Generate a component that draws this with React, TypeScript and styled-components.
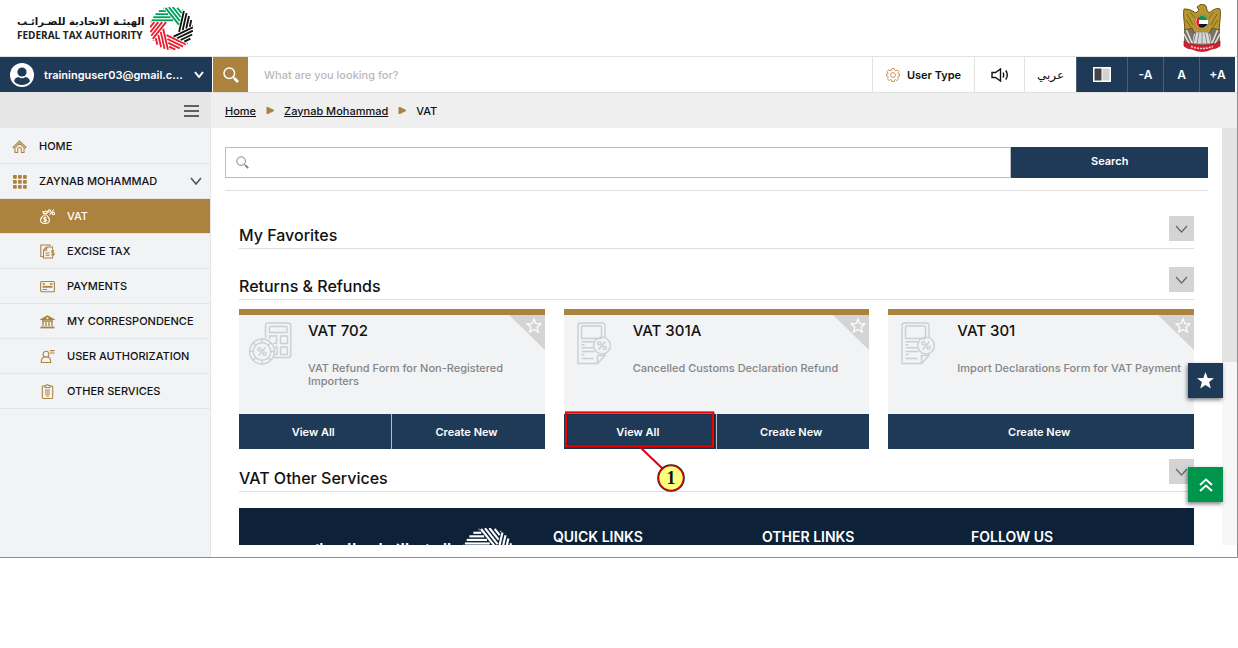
import React from "react";
import styled, { createGlobalStyle, css } from "styled-components";

const navy = "#1f3a57";
const gold = "#ac823f";
const grey = "#d4d4d4";

const GlobalStyle = createGlobalStyle`
  *, *::before, *::after { box-sizing: border-box; }
  body {
    margin: 0;
    background: #fff;
    color: #111;
    font-family: Inter, "Open Sans", "DejaVu Sans", sans-serif;
    font-size: 12px;
  }
  button, input { font: inherit; color: inherit; border: 0; margin: 0; padding: 0; background: none; border-radius: 0; }
  button { cursor: pointer; }
  a { color: inherit; text-decoration: none; }
  ul, ol { list-style: none; margin: 0; padding: 0; }
  h2, h3, p { margin: 0; font-weight: 500; }
  svg { display: block; flex: none; }
`;

const Frame = styled.div`
  display: flex;
  flex-direction: column;
  height: calc(100vh - 90px);
  min-height: 480px;
  border-right: 1px solid #8e8e8e;
  border-bottom: 1px solid #8e8e8e;
`;

const Header = styled.header`
  display: flex;
  align-items: center;
  justify-content: space-between;
  flex: none;
  height: 57px;
  padding: 0 16px 0 17px;
  border-bottom: 1px solid #e2e2e2;
`;

const Brand = styled.a`
  display: flex;
  align-items: center;
  gap: 6px;
`;

const BrandText = styled.span`
  display: flex;
  flex-direction: column;
  align-items: stretch;
  white-space: nowrap;
`;

const BrandArabic = styled.span<{ $size: number }>`
  font: bold ${(p) => p.$size}px/14px "DejaVu Sans", sans-serif;
  text-align: right;
  white-space: nowrap;
`;

const BrandLatin = styled.span`
  font: 700 10px/12px "Open Sans", sans-serif;
  color: #222;
`;

const TopBar = styled.div`
  display: flex;
  flex: none;
  height: 36px;
  padding-right: 2px;
  border-bottom: 1px solid #e2e2e2;
`;

const UserButton = styled.button`
  display: flex;
  align-items: center;
  flex: none;
  width: 212px;
  padding: 0 8px 0 10px;
  gap: 10px;
  background: ${navy};
  color: #fff;
  font-size: 11px;
  font-weight: 600;
  text-align: left;
`;

const UserName = styled.span`
  flex: 1;
  white-space: nowrap;
`;

const GlobalSearch = styled.form`
  display: flex;
  flex: 1;
  min-width: 0;
  padding-left: 1px;
`;

const GlobalSearchButton = styled.button`
  display: flex;
  align-items: center;
  justify-content: center;
  width: 35px;
  background: ${gold};
  color: #fff;
`;

const GlobalSearchInput = styled.input`
  flex: 1;
  min-width: 0;
  padding: 0 16px;
  outline: 0;
  font-size: 11px;
  font-weight: 500;
  &::placeholder { color: #b9b9b9; opacity: 1; }
`;

const Tool = styled.button<{ $width: number; $dark?: boolean }>`
  display: flex;
  align-items: center;
  justify-content: center;
  gap: 7px;
  flex: none;
  width: ${(p) => p.$width}px;
  font-size: 11px;
  font-weight: 600;
  border-left: 1px solid #e2e2e2;
  ${(p) => p.$dark && css`
    background: ${navy};
    color: #fff;
    font-size: 12px;
    border-left-color: #4a6078;
  `}
`;

const Arabic = styled.span`
  font: 12px "DejaVu Sans", sans-serif;
`;

const Columns = styled.div`
  display: flex;
  flex: 1;
  min-height: 0;
`;

const Sidebar = styled.nav`
  flex: none;
  width: 211px;
  background: #f1f3f5;
  border-right: 1px solid #e4e5e7;
`;

const MenuToggle = styled.button`
  display: flex;
  align-items: center;
  justify-content: flex-end;
  width: 100%;
  height: 35px;
  padding-right: 11px;
  background: #e6e6e6;
  color: #333;
`;

const NavList = styled.ul`
  padding-top: 1px;
`;

const NavLink = styled.a<{ $nested?: boolean; $active?: boolean }>`
  display: flex;
  align-items: center;
  gap: 12px;
  height: 35px;
  padding: 0 8px 0 ${(p) => (p.$nested ? 40 : 12)}px;
  border-bottom: 1px solid #e4e5e7;
  font-size: 11px;
  font-weight: 500;
  white-space: nowrap;
  color: ${(p) => (p.$active ? "#fff" : "#111")};
  background: ${(p) => (p.$active ? gold : "transparent")};
  svg:first-child { color: ${(p) => (p.$active ? "#fff" : gold)}; }
  svg:last-child:not(:first-child) { margin-left: auto; color: #555; }
`;

const Main = styled.main`
  position: relative;
  display: flex;
  flex-direction: column;
  flex: 1;
  min-width: 0;
  padding-bottom: 12px;
`;

const Breadcrumb = styled.ol`
  display: flex;
  align-items: center;
  gap: 10px;
  flex: none;
  height: 35px;
  padding: 0 14px;
  background: #efefef;
  font-size: 11px;
  font-weight: 500;
  a { text-decoration: underline; }
`;

const ScrollRow = styled.div`
  display: flex;
  flex: 1;
  min-height: 0;
`;

const Content = styled.div`
  flex: 1;
  min-width: 0;
  overflow: hidden;
  padding: 19px 14px 0;
`;

const ScrollTrack = styled.div`
  width: 15px;
  background: #f7f7f7;
`;

const ScrollThumb = styled.div`
  height: 56%;
  background: #e3e3e3;
`;

const ServiceSearch = styled.form`
  display: flex;
  height: 31px;
`;

const SearchField = styled.label`
  display: flex;
  align-items: center;
  flex: 1;
  min-width: 0;
  padding-left: 10px;
  border: 1px solid #bdbdbd;
  color: #777;
`;

const SearchInput = styled.input`
  flex: 1;
  min-width: 0;
  height: 100%;
  padding: 0 8px;
  outline: 0;
`;

const SearchButton = styled.button`
  width: 20%;
  padding-bottom: 3px;
  background: ${navy};
  color: #fff;
  font-size: 11px;
  font-weight: 600;
`;

const Sections = styled.div`
  margin-top: 12px;
  padding: 25px 14px 0;
  border-top: 1px solid #e0e0e0;
`;

const SectionHead = styled.div<{ $gap: number }>`
  display: flex;
  justify-content: space-between;
  height: 33px;
  margin-bottom: ${(p) => p.$gap}px;
  border-bottom: 1px solid #dedede;
`;

const SectionTitle = styled.h2`
  align-self: flex-end;
  font-size: 16px;
  line-height: 26px;
`;

const Collapse = styled.button`
  display: flex;
  align-items: center;
  justify-content: center;
  width: 25px;
  height: 25px;
  background: ${grey};
  color: #666;
`;

const Cards = styled.div`
  display: grid;
  grid-template-columns: repeat(3, 1fr);
  gap: 19px;
  margin-bottom: 10px;
`;

const Card = styled.article`
  position: relative;
  display: flex;
  flex-direction: column;
  border-top: 6px solid ${gold};
  background: #f1f3f5;
`;

const CardBody = styled.div`
  display: flex;
  gap: 14px;
  min-height: 99px;
  padding: 7px 0 0 10px;
  color: #ccced0;
`;

const CardText = styled.div`
  flex: 1;
`;

const CardTitle = styled.h3`
  font-size: 15px;
  line-height: 18px;
  color: #111;
`;

const CardDescription = styled.p`
  margin-top: 22px;
  font-size: 11px;
  line-height: 13px;
  color: #858585;
`;

const Favourite = styled.button`
  position: absolute;
  top: 0;
  right: 0;
`;

const CardActions = styled.div`
  display: flex;
`;

const CardAction = styled.button`
  flex: 1;
  height: 35px;
  padding-right: 4px;
  background: ${navy};
  color: #fff;
  font-size: 11px;
  font-weight: 600;
  & + & { border-left: 1px solid #b5bec8; }
`;

const Callout = styled.svg`
  position: absolute;
  left: 0;
  bottom: -44px;
  z-index: 2;
  pointer-events: none;
`;

const SiteFooter = styled.footer`
  display: grid;
  grid-template-columns: 314fr 209fr 209fr 223fr;
  height: 160px;
  padding-top: 20px;
  background: #0d2238;
  color: #fff;
`;

const FooterTitle = styled.h2`
  font-size: 14px;
  line-height: 18px;
  font-weight: 600;
`;

const FooterBrand = styled.div`
  display: flex;
  align-items: flex-start;
  justify-content: flex-end;
  gap: 12px;
  padding-right: 40px;
`;

const FooterBrandText = styled.div`
  padding-top: 12px;
`;

const FloatingButton = styled.button<{ $top: number; $green?: boolean }>`
  position: absolute;
  right: 14px;
  top: ${(p) => p.$top}px;
  display: flex;
  align-items: center;
  justify-content: center;
  width: 35px;
  height: 35px;
  background: ${(p) => (p.$green ? "#00954c" : navy)};
  color: #fff;
  box-shadow: -1px 2px 4px rgba(0, 0, 0, 0.5);
`;

const STEP = 360 / 7;

function Emblem({ size, colors }: { size: number; colors: string[] }) {
  const rad = (STEP * Math.PI) / 180;
  return (
    <svg width={size} height={size} viewBox="-21 -21 42 42" aria-hidden="true">
      {colors.map((color, g) => (
        <g key={g} transform={`rotate(${g * STEP})`} stroke={color} strokeWidth="1.8">
          {[8, 11, 14, 17, 19.7].map((h) => (
            <line
              key={h}
              x1={-Math.sqrt(441 - h * h)}
              x2={(6.2 - Math.cos(rad) * h) / Math.sin(rad)}
              y1={-h}
              y2={-h}
            />
          ))}
        </g>
      ))}
    </svg>
  );
}

const brandColors = ["#00a05a", "#00a05a", "#111", "#111", "#ee1c2e", "#ee1c2e", "#ee1c2e"];

function Falcon() {
  return (
    <svg width="38" height="48" viewBox="0 0 38 48" role="img" aria-label="UAE emblem">
      <path d="M4 20 L1 25 V40 L9 43 H29 L37 40 V25 L34 20 Z" fill="#77716a" />
      <path d="M3 25 L9 39 M1 30 L7 41 M35 25 L29 39 M37 30 L31 41 M12 28 L10 40 M26 28 L28 40" stroke="#e9e4dc" strokeWidth="1.5" />
      <path d="M16 6 L14 3 Q17 0 20 0 Q24 1 24 6 L26 9 Q33 3 37 5 Q38 10 37 16 L36 26 L29 24 L26 30 H12 L9 24 L2 26 L1 16 Q0 9 1 5 Q6 4 13 9 Z" fill="#b8952f" stroke="#6b5416" strokeWidth="1" />
      <path d="M4 10 L10 21 M3 16 L8 23 M34 10 L28 21 M35 16 L30 23 M7 8 L12 14 M31 8 L26 14" stroke="#7d6420" strokeWidth="1" />
      <path d="M13 28 H25 L28 40 H10 Z" fill="#d9d9d9" stroke="#888" />
      <path d="M16 29 L14 40 M19 29 V40 M22 29 L24 40" stroke="#8a8a8a" />
      <circle cx="19" cy="18" r="7" fill="#fff" stroke="#a58a3c" strokeWidth="1.5" />
      <path d="M14 14.5 A6 6 0 0 1 24 14.5 L24.5 16 H15 Z" fill="#14924d" />
      <path d="M15 20 H24.6 A6 6 0 0 1 16 23 Z" fill="#151515" />
      <path d="M16 12.9 V23.1 A6 6 0 0 1 16 12.9 Z" fill="#e0202c" />
      <path d="M1 37 Q5 41 10 40 Q19 43 28 40 Q33 41 37 37 V42 Q33 45 29 45 Q19 50 9 45 Q4 45 1 42 Z" fill="#d7202e" stroke="#a3121f" strokeWidth="0.7" />
      <path d="M8 42.5 Q19 46.5 30 42.5" stroke="#f7c9cc" strokeWidth="1.6" strokeDasharray="2 1" fill="none" />
    </svg>
  );
}

function Chevron({ width, height, stroke = 1.5 }: { width: number; height: number; stroke?: number }) {
  return (
    <svg width={width} height={height} viewBox={`0 0 ${width} ${height}`} fill="none" stroke="currentColor" strokeWidth={stroke} aria-hidden="true">
      <path d={`M1 1 L${width / 2} ${height - 1} L${width - 1} 1`} />
    </svg>
  );
}

function Magnifier({ size, stroke }: { size: number; stroke: number }) {
  return (
    <svg width={size} height={size} viewBox="0 0 16 16" fill="none" stroke="currentColor" strokeWidth={stroke} aria-hidden="true">
      <circle cx="6.3" cy="6.3" r="5.3" />
      <path d="M10.2 10.2 L11.5 11.5" />
      <path d="M11.3 11.3 L15 15" strokeWidth={stroke * 1.8} />
    </svg>
  );
}

const navIcons: Record<string, React.ReactNode> = {
  home: (
    <>
      <path d="M1 8.3 L7.5 2 L14 8.3 L12.7 9.3 L7.5 4.3 L2.3 9.3 Z" />
      <path d="M3 9.5 V13.5 H5.7 V10 Q5.7 8.5 7.5 8.5 Q9.3 8.5 9.3 10 V13.5 H12 V9.5" />
    </>
  ),
  grid: (
    <g fill="currentColor" stroke="none">
      {[1, 6, 11].map((y) => [1, 6, 11].map((x) => <rect key={`${x}-${y}`} x={x} y={y} width="3.8" height="3.8" rx="0.8" />))}
    </g>
  ),
  vat: (
    <>
      <path d="M3.5 4.5 L3 2.5 L4.5 3 L5.5 2 L6.5 3 L7.5 2.5 L7 4.5 Z M3.5 6 H7" />
      <path d="M3.5 6.5 Q0.6 8.7 0.6 11.5 Q0.6 14.4 5 14.4 Q9.4 14.4 9.4 11.5 Q9.4 8.7 7 6.5" />
      <path d="M6.6 9 Q5 8 3.9 8.9 Q3.3 10 5 10.5 Q6.8 11 6.2 12.2 Q5 13.2 3.5 12.2 M5 7.6 V13.6" />
      <path d="M13.7 0.5 L9.6 6" />
      <circle cx="9.4" cy="2" r="1.2" />
      <circle cx="13.4" cy="4.5" r="1.2" />
    </>
  ),
  excise: (
    <>
      <path d="M3 12.5 H0.8 V1 H10 V2" />
      <path d="M12.5 5 V3 H6.5 L3.5 6 V14 H12.5 V12.5 M3.5 6.3 H6.6 V3 M5.5 9 H9.5 M5.5 11.3 H9.5" />
      <path d="M14.2 6.8 Q12 5.9 11.6 7.4 Q11.6 8.6 13 8.8 Q14.6 9.2 14 10.6 Q12.8 11.5 11.3 10.5 M12.9 5.3 V12.2" />
    </>
  ),
  payments: (
    <>
      <rect x="0.6" y="2.5" width="13.8" height="10.2" rx="1" />
      <path d="M2.5 7.8 H12.5" strokeWidth="1.8" />
      <path d="M2.5 5 H5 M10 5 H12.5" strokeWidth="1.5" />
      <path d="M2.5 10.5 H7" />
    </>
  ),
  bank: (
    <>
      <path d="M1 5.5 L7.5 1.8 L14 5.5 Z" fill="currentColor" />
      <path d="M2 7 H13 M3 7 V12 M6 8 V12 M9 8 V12 M12 7 V12" strokeWidth="1.3" />
      <path d="M0.5 13.5 H14.5" strokeWidth="1.8" />
      <circle cx="7.5" cy="4.2" r="0.9" fill="#fff" stroke="none" />
    </>
  ),
  user: (
    <>
      <circle cx="6" cy="5.2" r="2.9" />
      <path d="M4.5 8 Q1.2 8.5 1.2 13.4 H10.8 Q10.8 8.5 7.5 8" />
      <path d="M10 1.6 H14.5 M10 4 H14.5" />
    </>
  ),
  clipboard: (
    <>
      <rect x="2.3" y="2" width="10.4" height="12.4" rx="0.8" />
      <path d="M5 3.5 V1.5 H6.3 Q7.5 -0.4 8.7 1.5 H10 V3.5 Z" fill="#f1f3f5" />
      <path d="M5 6 H10 M5 8 H10 M5 10 H10 M6 12 H9" />
    </>
  ),
};

function NavIcon({ name }: { name: string }) {
  return (
    <svg width="15" height="15" viewBox="0 0 15 15" fill="none" stroke="currentColor" strokeWidth="1.05" aria-hidden="true">
      {navIcons[name]}
    </svg>
  );
}

function Percent({ cx, cy }: { cx: number; cy: number }) {
  return (
    <g transform={`translate(${cx} ${cy})`}>
      <path d="M3.3 -4 L-3.3 4" />
      <circle cx="-2.6" cy="-2.2" r="1.6" />
      <circle cx="2.6" cy="2.2" r="1.6" />
    </g>
  );
}

function CalculatorIcon() {
  return (
    <svg width="45" height="44" viewBox="0 0 45 44" fill="none" stroke="currentColor" strokeWidth="1.4" aria-hidden="true">
      <path d="M16.5 16 V3.5 Q16.5 1 19 1 H39 Q41.8 1 41.8 3.5 V33 Q41.8 35.5 39 35.5 H25" />
      <rect x="20.5" y="4.5" width="17.5" height="6" rx="0.6" />
      <path d="M20.5 17 V14 H27.5 V21.5 H24" />
      <rect x="31.5" y="14" width="7" height="7.5" rx="0.6" />
      <rect x="31.5" y="25" width="7" height="7.5" rx="0.6" />
      <path d="M26 25 H28 V32.5 H25.5" />
      <circle cx="13" cy="29.5" r="12.5" />
      <circle cx="13" cy="29.5" r="8.8" />
      {[0, 45, 90, 135, 180, 225, 270, 315].map((a) => (
        <path key={a} d="M13 17 V20.7" transform={`rotate(${a} 13 29.5)`} />
      ))}
      <Percent cx={13} cy={29.5} />
    </svg>
  );
}

function DocumentIcon() {
  return (
    <svg width="45" height="44" viewBox="0 0 45 44" fill="none" stroke="currentColor" strokeWidth="1.4" aria-hidden="true">
      <path d="M31 15.5 V3.5 Q31 1 28.5 1 H6.5 Q4 1 4 3.5 V41.5 H23.5 L31 33.5 V32" />
      <path d="M23.5 41.5 V33.5 H31" />
      <rect x="7.5" y="4" width="20" height="12.5" rx="0.8" />
      <path d="M7.5 19.8 H19.5 M7.5 22.8 H10.5 M7.5 25.8 H19 M7.5 29.5 H20.5 M7.5 32.5 H10.5 M7.5 36.5 H19.5" />
      <circle cx="28" cy="23.5" r="8.4" />
      <Percent cx={28} cy={23.5} />
    </svg>
  );
}

function StarCorner() {
  return (
    <svg width="36" height="35" viewBox="0 0 36 35" aria-hidden="true">
      <path d="M0 0 H36 V35 Z" fill={grey} />
      <path d="M25 4 L26.9 8.7 L31.8 9 L28.1 12.2 L29.3 17 L25 14.4 L20.7 17 L21.9 12.2 L18.2 9 L23.1 8.7 Z" fill="none" stroke="#fff" strokeWidth="1.2" />
    </svg>
  );
}

const services = [
  { title: "VAT 702", text: "VAT Refund Form for Non-Registered Importers", icon: <CalculatorIcon />, actions: ["View All", "Create New"] },
  { title: "VAT 301A", text: "Cancelled Customs Declaration Refund", icon: <DocumentIcon />, actions: ["View All", "Create New"], callout: true },
  { title: "VAT 301", text: "Import Declarations Form for VAT Payment", icon: <DocumentIcon />, actions: ["Create New"] },
];

const navItems = [
  { label: "VAT", icon: "vat", active: true },
  { label: "EXCISE TAX", icon: "excise" },
  { label: "PAYMENTS", icon: "payments" },
  { label: "MY CORRESPONDENCE", icon: "bank" },
  { label: "USER AUTHORIZATION", icon: "user" },
  { label: "OTHER SERVICES", icon: "clipboard" },
];

function Section({ title, gap }: { title: string; gap: number }) {
  return (
    <SectionHead $gap={gap}>
      <SectionTitle>{title}</SectionTitle>
      <Collapse type="button" aria-label={`Toggle ${title}`}>
        <Chevron width={13} height={8} stroke={1.2} />
      </Collapse>
    </SectionHead>
  );
}

function Arrow() {
  return (
    <svg width="8" height="7" viewBox="0 0 8 7" aria-hidden="true">
      <path d="M0.5 0 H2 L8 3 V4 L2 7 H0.5 Z" fill={gold} />
    </svg>
  );
}

export default function App() {
  return (
    <>
      <GlobalStyle />
      <Frame>
        <Header>
          <Brand href="#">
            <BrandText>
              <BrandArabic $size={10} lang="ar" dir="rtl">الهيئـة الاتحادية للضـرائـب</BrandArabic>
              <BrandLatin>FEDERAL TAX AUTHORITY</BrandLatin>
            </BrandText>
            <Emblem size={43} colors={brandColors} />
          </Brand>
          <Falcon />
        </Header>
        <TopBar>
          <UserButton type="button">
            <svg width="24" height="24" viewBox="0 0 24 24" aria-hidden="true">
              <circle cx="12" cy="12" r="12" fill="#fff" />
              <circle cx="12" cy="9" r="4.6" fill={navy} />
              <path d="M4 18.2 Q5 14.6 8.5 14 Q12 16.4 15.5 14 Q19 14.6 20 18.2 Q17 22 12 22 Q7 22 4 18.2 Z" fill={navy} />
            </svg>
            <UserName>traininguser03@gmail.c...</UserName>
            <Chevron width={10} height={7} stroke={2} />
          </UserButton>
          <GlobalSearch onSubmit={(e) => e.preventDefault()}>
            <GlobalSearchButton aria-label="Search site"><Magnifier size={16} stroke={1.5} /></GlobalSearchButton>
            <GlobalSearchInput aria-label="Search site" placeholder="What are you looking for?" />
          </GlobalSearch>
          <Tool type="button" $width={102}>
            <svg width="14" height="14" viewBox="0 0 14 14" fill="none" stroke="#c58a4a" strokeWidth="0.9" aria-hidden="true">
              <path d="M5.8 0.5 H8.2 L8.6 2.2 L10 2.8 L11.4 1.9 L13 3.6 L12 5 L12.2 5.8 L13.5 6.1 V8.1 L12.1 8.4 L11.7 9.4 L12.6 10.9 L10.9 12.5 L9.5 11.6 L8.6 12 L8.2 13.5 H5.8 L5.4 12 L4.5 11.6 L3.1 12.5 L1.4 10.9 L2.3 9.4 L1.9 8.4 L0.5 8.1 V6.1 L1.8 5.8 L2 5 L1 3.6 L2.6 1.9 L4 2.8 L5.4 2.2 Z" />
              <circle cx="7" cy="7" r="2.4" />
            </svg>
            User Type
          </Tool>
          <Tool type="button" $width={50} aria-label="Listen">
            <svg width="18" height="14" viewBox="0 0 18 14" fill="none" stroke="#111" strokeWidth="1.4" aria-hidden="true">
              <path d="M1 4.5 H4.5 L9.5 1 V13 L4.5 9.5 H1 Z" />
              <path d="M12 4.5 Q13.4 7 12 9.5 M14.8 2.5 Q17.8 7 14.8 11.5" />
            </svg>
          </Tool>
          <Tool type="button" $width={52} lang="ar"><Arabic>عربي</Arabic></Tool>
          <Tool type="button" $width={51} $dark aria-label="Contrast">
            <svg width="18" height="15" viewBox="0 0 18 15" aria-hidden="true">
              <rect width="18" height="15" fill="#fff" />
              <rect x="1.5" y="1.5" width="7" height="12" fill="#444" />
              <rect x="9.5" y="1.5" width="7" height="12" fill="#d2d2d2" />
            </svg>
          </Tool>
          <Tool type="button" $width={36} $dark>-A</Tool>
          <Tool type="button" $width={36} $dark>A</Tool>
          <Tool type="button" $width={36} $dark>+A</Tool>
        </TopBar>
        <Columns>
          <Sidebar>
            <MenuToggle type="button" aria-label="Menu">
              <svg width="15" height="12" viewBox="0 0 15 12" stroke="currentColor" strokeWidth="1.7" aria-hidden="true">
                <path d="M0 1 H15 M0 6 H15 M0 11 H15" />
              </svg>
            </MenuToggle>
            <NavList>
              <li><NavLink href="#"><NavIcon name="home" />HOME</NavLink></li>
              <li>
                <NavLink href="#"><NavIcon name="grid" />ZAYNAB MOHAMMAD<Chevron width={12} height={8} stroke={1.6} /></NavLink>
                <ul>
                  {navItems.map((item) => (
                    <li key={item.label}>
                      <NavLink href="#" $nested $active={item.active}><NavIcon name={item.icon} />{item.label}</NavLink>
                    </li>
                  ))}
                </ul>
              </li>
            </NavList>
          </Sidebar>
          <Main>
            <Breadcrumb>
              <li><a href="#">Home</a></li>
              <li><Arrow /></li>
              <li><a href="#">Zaynab Mohammad</a></li>
              <li><Arrow /></li>
              <li>VAT</li>
            </Breadcrumb>
            <ScrollRow>
              <Content>
                <ServiceSearch onSubmit={(e) => e.preventDefault()}>
                  <SearchField>
                    <Magnifier size={13} stroke={1.1} />
                    <SearchInput aria-label="Search services" />
                  </SearchField>
                  <SearchButton>Search</SearchButton>
                </ServiceSearch>
                <Sections>
                  <Section title="My Favorites" gap={18} />
                  <Section title="Returns &amp; Refunds" gap={9} />
                  <Cards>
                    {services.map((s) => (
                      <Card key={s.title}>
                        <CardBody>
                          {s.icon}
                          <CardText>
                            <CardTitle>{s.title}</CardTitle>
                            <CardDescription>{s.text}</CardDescription>
                          </CardText>
                        </CardBody>
                        <Favourite type="button" aria-label={`Add ${s.title} to favorites`}><StarCorner /></Favourite>
                        <CardActions>
                          {s.actions.map((a) => <CardAction key={a} type="button">{a}</CardAction>)}
                        </CardActions>
                        {s.callout && (
                          <Callout width="152" height="84" viewBox="0 0 152 84" aria-label="Step 1">
                            <rect x="2.5" y="4" width="147" height="34" fill="none" stroke="#111" strokeOpacity="0.35" strokeWidth="3" />
                            <rect x="2" y="3.5" width="147" height="34" fill="none" stroke="#f00000" strokeWidth="2" />
                            <path d="M77 39 L100 61" stroke="#e00010" strokeWidth="2" />
                            <circle cx="107" cy="69" r="13" fill="#ffff80" stroke="#222" strokeWidth="1.6" />
                            <circle cx="107" cy="69" r="12.4" fill="none" stroke="#e00000" strokeWidth="1.4" />
                            <text x="107" y="75" textAnchor="middle" fontFamily="Liberation Serif, serif" fontSize="18" fontWeight="bold" fill="#111">1</text>
                          </Callout>
                        )}
                      </Card>
                    ))}
                  </Cards>
                  <Section title="VAT Other Services" gap={16} />
                  <SiteFooter>
                    <FooterBrand>
                      <FooterBrandText>
                        <BrandArabic $size={12} lang="ar" dir="rtl">الهيئـة الاتحادية للضـرائب</BrandArabic>
                      </FooterBrandText>
                      <Emblem size={50} colors={Array(7).fill("#fff")} />
                    </FooterBrand>
                    <FooterTitle>QUICK LINKS</FooterTitle>
                    <FooterTitle>OTHER LINKS</FooterTitle>
                    <FooterTitle>FOLLOW US</FooterTitle>
                  </SiteFooter>
                </Sections>
              </Content>
              <ScrollTrack><ScrollThumb /></ScrollTrack>
            </ScrollRow>
            <FloatingButton type="button" $top={270} aria-label="Favorites">
              <svg width="17" height="17" viewBox="0 0 17 17" aria-hidden="true">
                <path d="M8.5 0 L10.7 5.9 L17 6.2 L12.1 10.1 L13.8 16.4 L8.5 12.9 L3.2 16.4 L4.9 10.1 L0 6.2 L6.3 5.9 Z" fill="#fff" />
              </svg>
            </FloatingButton>
            <FloatingButton type="button" $top={374} $green aria-label="Back to top">
              <svg width="14" height="14" viewBox="0 0 14 14" fill="none" stroke="#fff" strokeWidth="2" aria-hidden="true">
                <path d="M1 7 L7 1.5 L13 7 M1 13 L7 7.5 L13 13" />
              </svg>
            </FloatingButton>
          </Main>
        </Columns>
      </Frame>
    </>
  );
}
